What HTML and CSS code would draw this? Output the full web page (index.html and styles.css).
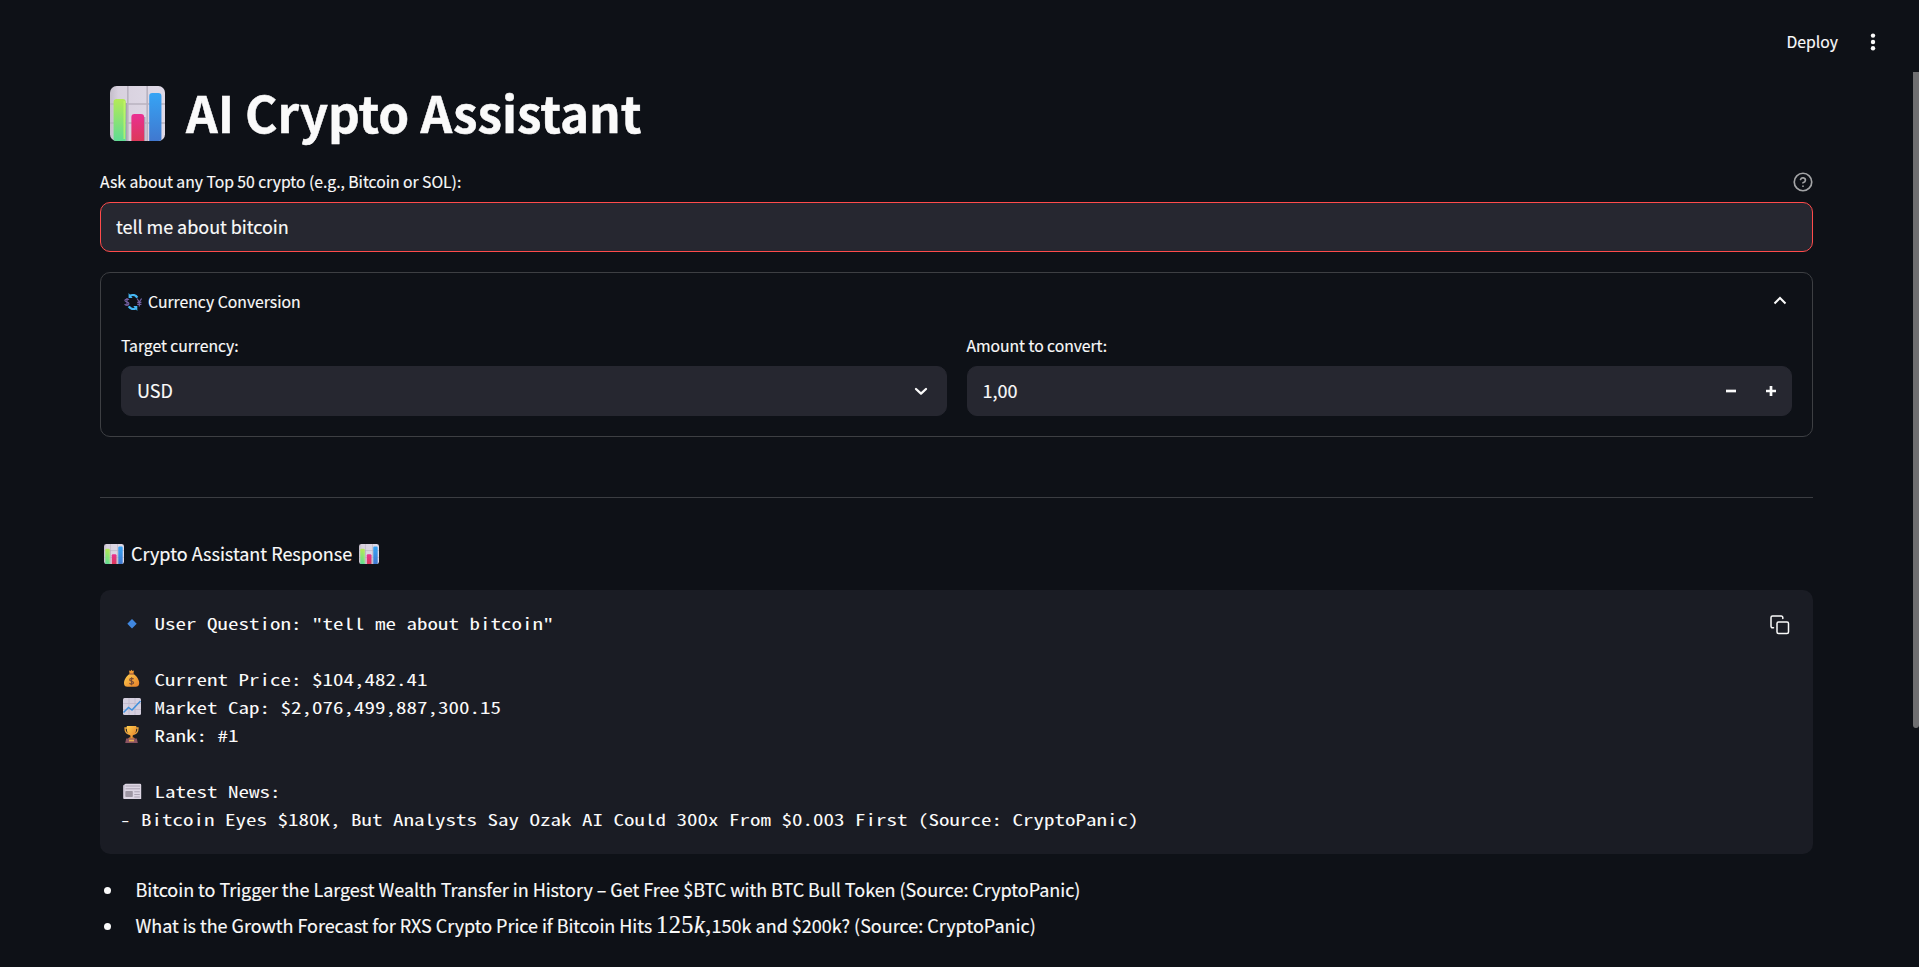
FILE: index.html
```html
<!DOCTYPE html>
<html lang="en">
<head>
<meta charset="utf-8">
<title>AI Crypto Assistant</title>
<link rel="stylesheet" href="styles.css">
</head>
<body>
<svg class="defs" width="0" height="0" aria-hidden="true">
  <defs>
    <linearGradient id="gGreen" x1="0" y1="0" x2="0" y2="1"><stop offset="0" stop-color="#b4ea55"/><stop offset="1" stop-color="#5fdc94"/></linearGradient>
    <linearGradient id="gPink" x1="0" y1="0" x2="0" y2="1"><stop offset="0" stop-color="#ea3092"/><stop offset="1" stop-color="#dc3859"/></linearGradient>
    <linearGradient id="gBlue" x1="0" y1="0" x2="0" y2="1"><stop offset="0" stop-color="#36a4f5"/><stop offset="1" stop-color="#4078cf"/></linearGradient>
    <linearGradient id="gTile" x1="0" y1="0" x2="1" y2="0"><stop offset="0" stop-color="#c4bdca"/><stop offset=".15" stop-color="#d8d1de"/><stop offset="1" stop-color="#dfdae7"/></linearGradient>
    <linearGradient id="gGold" x1="0" y1="0" x2="1" y2="1"><stop offset="0" stop-color="#ffd050"/><stop offset="1" stop-color="#e67c28"/></linearGradient>
    <clipPath id="tileClip"><rect width="54" height="55" rx="6.500"/></clipPath>
    <symbol id="barChart" viewBox="0 0 54 55" preserveAspectRatio="none">
      <g clip-path="url(#tileClip)">
        <rect width="54" height="55" fill="url(#gTile)"/>
        <path d="M17.500 0v55M36.500 0v55M0 18h54M0 37h54" stroke="#b9b2c0" stroke-width="1.600"/>
        <path d="M16 17v38M34 31v24" stroke="#aaa1b4" stroke-width="1.500"/>
        <path d="M3.500 55V16a3 3 0 0 1 3-3h6a3 3 0 0 1 3 3v39z" fill="url(#gGreen)"/>
        <path d="M14 15v38" stroke="#c9f866" stroke-width="1.500" opacity=".7"/>
        <path d="M21 55V31a3 3 0 0 1 3-3h6.500a3 3 0 0 1 3 3v24z" fill="url(#gPink)"/>
        <path d="M38.500 55V10a3 3 0 0 1 3-3h6a3 3 0 0 1 3 3v45z" fill="url(#gBlue)"/>
      </g>
    </symbol>
  </defs>
</svg>

<header class="toolbar">
  <span class="deploy">Deploy</span>
  <svg class="kebab" viewBox="0 0 6 18"><circle cx="3" cy="2.600" r="2.200"/><circle cx="3" cy="9" r="2.200"/><circle cx="3" cy="15.300" r="2.200"/></svg>
</header>

<main class="page">
  <h1 class="title"><svg class="title-icon"><use href="#barChart"/></svg><span>AI Crypto Assistant</span></h1>

  <div class="label-row">
    <label class="label ask">Ask about any Top 50 crypto (e.g., Bitcoin or SOL):</label>
    <svg class="help" viewBox="0 0 24 24" fill="none" stroke="#a3a4a6" stroke-width="2" stroke-linecap="round" stroke-linejoin="round"><circle cx="12" cy="12" r="10.500"/><path d="M9.090 9a3 3 0 0 1 5.830 1c0 2-3 3-3 3M12 17h.01"/></svg>
  </div>
  <div class="field focused"><span class="value question">tell me about bitcoin</span></div>

  <section class="expander">
    <div class="summary">
      <svg class="exchange" viewBox="0 0 18 18" fill="none">
        <path d="M13.300 4.600A5.500 5.500 0 0 0 6 2.800M4.700 13.400A5.500 5.500 0 0 0 12 15.200" stroke="#45b8f5" stroke-width="2.400"/>
        <path d="M4.600 0v5h4zM13.300 18v-5h-4z" fill="#45b8f5"/>
        <path d="M3 5.100v8M4.900 6.800C4.400 5.700.8 5.700.9 7.500c.1 1.600 4 1.300 4 3.200 0 1.700-3.400 1.900-4.200.4" stroke="#7561a3" stroke-width="1.200"/>
        <path d="M13 5.500l2.300 3.500 2.300-3.500M15.300 9v4.500M13.200 9.300h4.200M13.200 11.300h4.200" stroke="#7561a3" stroke-width="1.200"/>
      </svg>
      <span class="label summary-text">Currency Conversion</span>
      <svg class="chevron-up" viewBox="0 0 14 9"><path d="M1.500 7.500L7 2l5.500 5.500" fill="none" stroke="#fafafa" stroke-width="2"/></svg>
    </div>
    <div class="columns">
      <div class="column">
        <label class="label target">Target currency:</label>
        <div class="field"><span class="value usd">USD</span>
          <svg class="chevron-down" viewBox="0 0 14 9"><path d="M2 2l5 4.600L12 2" fill="none" stroke="#fafafa" stroke-width="2.300" stroke-linecap="round" stroke-linejoin="round"/></svg>
        </div>
      </div>
      <div class="column">
        <label class="label amount">Amount to convert:</label>
        <div class="field"><span class="value number">1,00</span>
          <svg class="step" viewBox="0 0 10 10"><path d="M0 5h10" stroke="#fafafa" stroke-width="2.700"/></svg>
          <svg class="step plus" viewBox="0 0 10 10"><path d="M0 5h10M5 0v10" stroke="#fafafa" stroke-width="2.700"/></svg>
        </div>
      </div>
    </div>
  </section>

  <hr class="divider">

  <p class="response"><svg class="small-chart"><use href="#barChart"/></svg><span class="response-text">Crypto Assistant Response</span><svg class="small-chart"><use href="#barChart"/></svg></p>

  <div class="code">
    <div class="line"><svg class="emoji" viewBox="0 0 23 28"><path d="M11 12l4.700 4.700-4.700 4.700-4.700-4.700z" fill="#4087df"/></svg><span> User Question: "tell me about bitcoin"</span></div>
    <div class="line"></div>
    <div class="line"><svg class="emoji" viewBox="0 0 23 28">
      <path d="M8 7.500l1.500.5 1-1.200 1 1.200 1.500-.5-.7 3.500H8.700z" fill="#f09a35"/>
      <path d="M8.500 11h4c3 1.800 6 6 5.700 9.300-.2 2.600-1.500 3.500-3.500 3.500H6.500C4.300 23.800 3 22.800 3 20.300 3 16.700 5.700 12.700 8.500 11z" fill="url(#gGold)"/>
      <path d="M8.200 11h4.800" stroke="#a85f3d" stroke-width="1.300"/>
      <path d="M12.600 16.200c-1-1.300-4-1-3.900.7.1 1.600 3.900 1.100 3.900 2.800 0 1.600-3.100 1.800-4.100.4M10.600 14.300v8" fill="none" stroke="#7c4b35" stroke-width="1.200"/></svg><span> Current Price: $104,482.41</span></div>
    <div class="line"><svg class="emoji" viewBox="0 0 23 28"><rect x="2" y="7" width="18" height="17" rx="1.500" fill="#d5cfdf"/><path d="M8 7v17M14 7v17M2 12.500h18M2 18.500h18" stroke="#beb7ca" stroke-width=".8"/><path d="M2.500 21.500l5-5 3.500 2.500 8.500-9" fill="none" stroke="#3f90dc" stroke-width="1.500"/></svg><span> Market Cap: $2,076,499,887,300.15</span></div>
    <div class="line"><svg class="emoji" viewBox="0 0 23 28">
      <path d="M6.500 9H4c0 3.500 1.200 5.500 4 6M14.500 9H17c0 3.500-1.200 5.500-4 6" fill="none" stroke="#e8a33d" stroke-width="1.300"/>
      <path d="M5.800 7h9.500c.3 5-.8 8.500-3.600 9.500v2.500H9.400v-2.500C6.600 15.500 5.500 12 5.800 7z" fill="url(#gGold)"/>
      <path d="M8 18.500h5l1 1.500H7z" fill="#e48b35"/><path d="M5.200 19.500h10.600l1 4.500H4.200z" fill="#8c5361"/><path d="M8 21.500h5" stroke="#e7b04e" stroke-width="1.800"/></svg><span> Rank: #1</span></div>
    <div class="line"></div>
    <div class="line"><svg class="emoji" viewBox="0 0 23 28"><path d="M2 10.500L4.500 9v15H3a1 1 0 0 1-1-1z" fill="#b5aebd"/><path d="M3.500 10a1.500 1.500 0 0 1 1.500-1.200h14a1.200 1.200 0 0 1 1.200 1.200v14H3z" fill="#ddd6e4"/><path d="M4.500 11h14.500M4.500 13.800h14.500M13.300 16.800h5.500M13.300 19.500h5.500M13.300 22h5.500" stroke="#aaa2b2" stroke-width="1"/><rect x="4.300" y="16" width="7.500" height="6" rx=".7" fill="#9d96a3"/></svg><span> Latest News:</span></div>
    <div class="line last"><span>- Bitcoin Eyes $180K, But Analysts Say Ozak AI Could 300x From $0.003 First (Source: CryptoPanic)</span></div>
    <svg class="copy" viewBox="0 0 20 20" fill="none" stroke="#fafafa" stroke-width="1.500" stroke-linejoin="round" stroke-linecap="round"><rect x="7" y="7" width="11.500" height="11.500" rx="1.500"/><path d="M3.500 12.800H2.500A1.500 1.500 0 0 1 1 11.300V2.500A1.500 1.500 0 0 1 2.500 1h8.800a1.500 1.500 0 0 1 1.500 1.500v1"/></svg>
  </div>

  <ul class="news">
    <li><span class="n1">Bitcoin to Trigger the Largest Wealth Transfer in History – Get Free $BTC with BTC Bull Token (Source: CryptoPanic)</span></li>
    <li><span class="n2">What is the Growth Forecast for RXS Crypto Price if Bitcoin Hits </span><span class="math">125<i>k</i>,</span><span class="n3">150k and $200k? (Source: CryptoPanic)</span></li>
  </ul>
</main>
<div class="scroll-thumb"></div>
</body>
</html>
```
FILE: styles.css
```css
* { box-sizing: border-box; }
html, body { margin: 0; height: 100%; overflow: hidden; }
body {
  background: #0e1117;
  color: #fafafa;
  font-family: "Noto Sans CJK SC", "Noto Sans", sans-serif;
  font-size: 18px;
  -webkit-text-stroke: 0.15px #fafafa;
}
svg { display: block; flex: none; }
.defs { position: absolute; }
.toolbar {
  height: 75px;
  padding: 8px 43px 0 0;
  display: flex;
  justify-content: flex-end;
  align-items: center;
}
.deploy { font-size: 15.750px; line-height: 24px; margin: 0 32px 0 0; }
.kebab { width: 6px; height: 18px; fill: #fafafa; margin-top: 0; }
.page { width: 1713px; margin-left: 100px; }
.title {
  margin: 0;
  height: 94px;
  padding: 0 0 0 10px;
  display: flex;
  align-items: flex-start;
  font-size: 49.500px;
  font-weight: 700;
  line-height: 66px;
  letter-spacing: -0.060px;
  white-space: pre;
  -webkit-text-stroke: 0.5px #fafafa;
}
.title-icon { width: 55px; height: 55px; margin: 11px 21px 0 0; }
.title span { margin-top: 4px; }
.label-row { display: flex; justify-content: space-between; height: 33px; }
.label { display: block; font-size: 15.750px; line-height: 24px; white-space: pre; }
.ask { margin-top: 1px; letter-spacing: -0.040px; }
.help { width: 20px; height: 20px; margin-top: 3px; }
.field {
  height: 50px;
  border: 1px solid #262730;
  border-radius: 10px;
  background: #262730;
  padding: 0 15px;
  display: flex;
  align-items: center;
}
.focused { border-color: #ff4b4b; }
.value { line-height: 30px; margin-top: -2px; white-space: pre; }
.question { letter-spacing: -0.040px; }
.expander {
  margin-top: 20px;
  height: 165px;
  border: 1px solid #3d3f43;
  border-radius: 10px;
  padding: 17px 20px 0;
}
.summary { display: flex; align-items: center; height: 24px; padding-left: 3px; }
.exchange { width: 18px; height: 18px; margin-right: 6px; }
.chevron-up { width: 14px; height: 9px; margin: -3px 5.500px 0 auto; }
.columns { display: flex; gap: 20px; margin-top: 20px; }
.column { flex: 1; }
.column .label { margin-bottom: 8px; letter-spacing: -0.050px; }
.chevron-down { width: 14px; height: 9px; margin: 0 3px 0 auto; }
.step { width: 10px; height: 10px; margin: 0 0 0 auto; }
.step.plus { margin: 0 0 0 30px; }
.divider { border: 0; height: 1px; background: #3b3d42; margin: 60px 0 0; }
.response { margin: 41px 0 0; padding-left: 4px; height: 30px; display: flex; align-items: center; }
.small-chart { width: 20px; height: 20px; }
.response-text { line-height: 30px; margin: -2px 7px 0; white-space: pre; }
.code {
  position: relative;
  margin-top: 21px;
  height: 264px;
  padding: 17px 21px;
  border-radius: 10px;
  background: #1a1c24;
  font-family: "Noto Sans Mono CJK SC", "Liberation Mono", monospace;
  font-size: 15.750px;
  line-height: 28px;
  -webkit-text-stroke: 0;
}
.line { height: 28px; display: flex; white-space: pre; }
/* Widened cells: half-em glyphs stretched to a 10.5px advance */
.line span { margin-top: 3px; transform: scaleX(1.3333); transform-origin: 0 0; }
.last { margin-left: -1px; }
.emoji { width: 23px; height: 28px; }
.copy { position: absolute; right: 23px; top: 25px; width: 20px; height: 20px; }
.news { list-style: none; margin: 17px 0 0; padding: 0; }
.news li { display: flex; height: 36px; line-height: 36px; align-items: center; white-space: pre; }
.news li::before { content: ""; width: 7px; height: 7px; border-radius: 50%; background: #fafafa; margin: 2px 24.500px 0 4px; }
.n1, .n2 { letter-spacing: -0.042px; }
.math { font-family: "Liberation Serif", serif; font-size: 24.200px; width: 56px; letter-spacing: 0.500px; margin-right: -0.500px; }
.scroll-thumb { position: absolute; right: 0; top: 72px; width: 6px; height: 656px; border-radius: 0 0 3px 3px; background: #6f6f71; }
```
